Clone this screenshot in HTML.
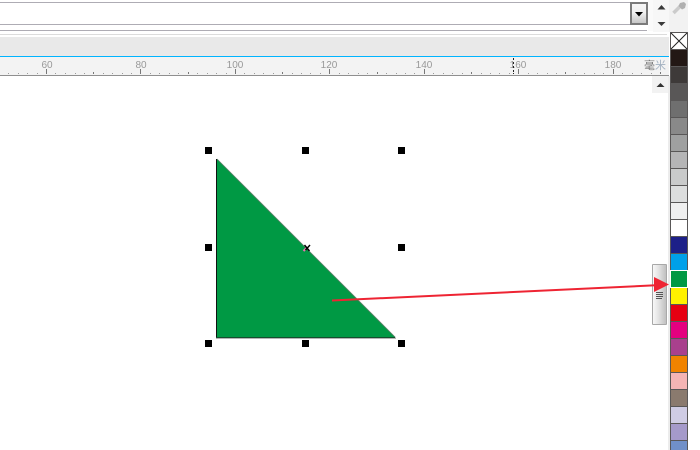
<!DOCTYPE html>
<html>
<head>
<meta charset="utf-8">
<style>
html,body{margin:0;padding:0;width:700px;height:450px;overflow:hidden;background:#fff}
svg{display:block;position:absolute;left:0;top:0}
text{font-family:"Liberation Sans","Noto Sans CJK SC",sans-serif;font-size:10px;fill:#999}
</style>
</head>
<body>
<svg width="700" height="450" viewBox="0 0 700 450" xmlns="http://www.w3.org/2000/svg" shape-rendering="crispEdges">
<defs>
<linearGradient id="btn" x1="0" y1="0" x2="0" y2="1"><stop offset="0" stop-color="#f6f6f6"/><stop offset=".45" stop-color="#f0f0f0"/><stop offset="1" stop-color="#c6c6c6"/></linearGradient>
<linearGradient id="grip" x1="0" y1="0" x2="1" y2="0"><stop offset="0" stop-color="#fafafa"/><stop offset=".45" stop-color="#e2e2e2"/><stop offset="1" stop-color="#bdbdbd"/></linearGradient>
</defs>
<!-- toolbar -->
<rect x="0" y="0" width="700" height="37" fill="#ffffff"/>
<rect x="648" y="0" width="5" height="31" fill="#fafafa"/>
<rect x="653" y="0" width="16" height="32" fill="#f7f7f7"/>
<rect x="669" y="0" width="19" height="32" fill="#f2f2f2"/>
<rect x="0" y="2" width="631" height="1" fill="#aeacb4"/>
<rect x="0" y="24" width="631" height="1" fill="#aeacb4"/>
<rect x="0" y="30" width="647" height="1" fill="#aeacb4"/>
<rect x="0" y="34" width="667" height="1" fill="#dcdcdc"/>
<rect x="631" y="3" width="16" height="21" fill="url(#btn)" stroke="#7a7a7a" stroke-width="2"/>
<rect x="632" y="4" width="14" height="19" fill="url(#btn)"/>
<polygon points="635,12 643,12 639,16.5" fill="#000" shape-rendering="auto"/>
<polygon points="661.5,5 657.5,9.5 665.5,9.5" fill="#3a3a3a" shape-rendering="auto"/>
<polygon points="657.5,22 665.5,22 661.5,26" fill="#3a3a3a" shape-rendering="auto"/>
<!-- eyedropper -->
<g shape-rendering="auto"><path d="M673.5 13 L681 5.5" stroke="#cbcbcb" stroke-width="3.5" fill="none"/><path d="M680 3 L684 2 L686 4 L685 8 L682 9.5 L678.5 6 Z" fill="#b0b0b0"/></g>
<!-- band -->
<rect x="0" y="37" width="669" height="19" fill="#e9e9e9"/>
<rect x="0" y="56" width="669" height="1" fill="#00b4ff"/>
<!-- ruler -->
<rect x="0" y="57" width="669" height="18" fill="#f3f3f3"/>
<rect x="0" y="75" width="669" height="1" fill="#8f8f8f"/>
<g fill="#9a9a9a">
<rect x="8" y="73" width="1" height="1"/><rect x="18" y="73" width="1" height="1"/><rect x="27" y="73" width="1" height="1"/><rect x="37" y="73" width="1" height="1"/>
<rect x="55" y="73" width="1" height="1"/><rect x="65" y="73" width="1" height="1"/><rect x="75" y="73" width="1" height="1"/><rect x="84" y="73" width="1" height="1"/>
<rect x="103" y="73" width="1" height="1"/><rect x="112" y="73" width="1" height="1"/><rect x="122" y="73" width="1" height="1"/><rect x="131" y="73" width="1" height="1"/>
<rect x="150" y="73" width="1" height="1"/><rect x="159" y="73" width="1" height="1"/><rect x="169" y="73" width="1" height="1"/><rect x="178" y="73" width="1" height="1"/>
<rect x="197" y="73" width="1" height="1"/><rect x="207" y="73" width="1" height="1"/><rect x="216" y="73" width="1" height="1"/><rect x="226" y="73" width="1" height="1"/>
<rect x="244" y="73" width="1" height="1"/><rect x="254" y="73" width="1" height="1"/><rect x="263" y="73" width="1" height="1"/><rect x="273" y="73" width="1" height="1"/>
<rect x="292" y="73" width="1" height="1"/><rect x="301" y="73" width="1" height="1"/><rect x="310" y="73" width="1" height="1"/><rect x="320" y="73" width="1" height="1"/>
<rect x="339" y="73" width="1" height="1"/><rect x="348" y="73" width="1" height="1"/><rect x="358" y="73" width="1" height="1"/><rect x="367" y="73" width="1" height="1"/>
<rect x="386" y="73" width="1" height="1"/><rect x="396" y="73" width="1" height="1"/><rect x="405" y="73" width="1" height="1"/><rect x="414" y="73" width="1" height="1"/>
<rect x="433" y="73" width="1" height="1"/><rect x="443" y="73" width="1" height="1"/><rect x="452" y="73" width="1" height="1"/><rect x="462" y="73" width="1" height="1"/>
<rect x="481" y="73" width="1" height="1"/><rect x="490" y="73" width="1" height="1"/><rect x="499" y="73" width="1" height="1"/><rect x="509" y="73" width="1" height="1"/>
<rect x="528" y="73" width="1" height="1"/><rect x="537" y="73" width="1" height="1"/><rect x="547" y="73" width="1" height="1"/><rect x="556" y="73" width="1" height="1"/>
<rect x="575" y="73" width="1" height="1"/><rect x="584" y="73" width="1" height="1"/><rect x="594" y="73" width="1" height="1"/><rect x="603" y="73" width="1" height="1"/>
<rect x="622" y="73" width="1" height="1"/><rect x="632" y="73" width="1" height="1"/><rect x="641" y="73" width="1" height="1"/><rect x="651" y="73" width="1" height="1"/>
</g>
<g fill="#777">
<rect x="46" y="69" width="1" height="5"/><rect x="140" y="69" width="1" height="5"/><rect x="235" y="69" width="1" height="5"/><rect x="329" y="69" width="1" height="5"/><rect x="424" y="69" width="1" height="5"/><rect x="518" y="69" width="1" height="5"/><rect x="613" y="69" width="1" height="5"/>
<rect x="93" y="72" width="1" height="2"/><rect x="188" y="72" width="1" height="2"/><rect x="282" y="72" width="1" height="2"/><rect x="377" y="72" width="1" height="2"/><rect x="471" y="72" width="1" height="2"/><rect x="565" y="72" width="1" height="2"/><rect x="660" y="72" width="1" height="2"/>
</g>
<g text-anchor="middle" shape-rendering="auto">
<text x="47" y="68">60</text><text x="141" y="68">80</text><text x="235" y="68">100</text><text x="329" y="68">120</text><text x="424" y="68">140</text><text x="518" y="68">160</text><text x="613" y="68">180</text>
</g>
<!-- ruler cursor marker (dashed) -->
<g fill="#222">
<rect x="513" y="58" width="1" height="2"/><rect x="513" y="62" width="1" height="2"/><rect x="513" y="66" width="1" height="2"/><rect x="513" y="70" width="1" height="2"/><rect x="513" y="73" width="1" height="1"/>
</g>
<g shape-rendering="auto">
<text x="644" y="69" style="font-size:11px;fill:#777">毫</text>
<text x="655" y="69" style="font-size:11px;fill:#a2b0c0">米</text>
</g>
<!-- scroll up button -->
<rect x="652" y="76" width="16" height="17" fill="#f2f2f2"/>
<polygon points="660.5,83 656.5,87 664.5,87" fill="#333" shape-rendering="auto"/>
<!-- palette -->
<rect x="668" y="76" width="2" height="374" fill="#ececec"/>
<rect x="670" y="32" width="18" height="418" fill="#595757"/>
<rect x="671" y="33" width="16" height="16" fill="#fff"/>
<g shape-rendering="auto"><path d="M671 33 L687 49 M687 33 L671 49" stroke="#222" stroke-width="1"/></g>
<rect x="671" y="50" width="16" height="16" fill="#231815"/>
<rect x="671" y="67" width="16" height="16" fill="#3e3a39"/>
<rect x="671" y="84" width="16" height="16" fill="#595757"/>
<rect x="671" y="101" width="16" height="16" fill="#6f6f6f"/>
<rect x="671" y="118" width="16" height="16" fill="#898989"/>
<rect x="671" y="135" width="16" height="16" fill="#9fa0a0"/>
<rect x="671" y="152" width="16" height="16" fill="#b5b5b6"/>
<rect x="671" y="169" width="16" height="16" fill="#c9caca"/>
<rect x="671" y="186" width="16" height="16" fill="#dcdddd"/>
<rect x="671" y="203" width="16" height="16" fill="#efefef"/>
<rect x="671" y="220" width="16" height="16" fill="#ffffff"/>
<rect x="671" y="237" width="16" height="16" fill="#1d2088"/>
<rect x="671" y="254" width="16" height="16" fill="#00a0e9"/>
<rect x="670" y="270" width="18" height="18" fill="#ffffff"/>
<rect x="671" y="271" width="16" height="16" fill="#009944"/>
<rect x="671" y="288" width="16" height="16" fill="#fff100"/>
<rect x="671" y="305" width="16" height="16" fill="#e60012"/>
<rect x="671" y="322" width="16" height="16" fill="#e4007f"/>
<rect x="671" y="339" width="16" height="16" fill="#a9408d"/>
<rect x="671" y="356" width="16" height="16" fill="#f08300"/>
<rect x="671" y="373" width="16" height="16" fill="#f4b4b4"/>
<rect x="671" y="390" width="16" height="16" fill="#8a7a6e"/>
<rect x="671" y="407" width="16" height="16" fill="#cfcce4"/>
<rect x="671" y="424" width="16" height="16" fill="#a59aca"/>
<rect x="671" y="441" width="16" height="9" fill="#7090c8"/>
<!-- scrollbar grip -->
<rect x="652.5" y="264.5" width="14" height="60" rx="1" fill="url(#grip)" stroke="#a8a8a8"/>
<g fill="#555"><rect x="656" y="292" width="7" height="1"/><rect x="656" y="294" width="7" height="1"/><rect x="656" y="296" width="7" height="1"/><rect x="656" y="298" width="6" height="1"/></g>
<!-- triangle -->
<polygon points="217,159 217,337 395,337" fill="#009944" stroke="none" shape-rendering="auto"/>
<g shape-rendering="auto">
<path d="M217 159 L395.5 337.5" stroke="#5b7f68" stroke-width="0.8" fill="none"/>
<path d="M216.5 159 L216.5 338" stroke="#111" stroke-width="1" fill="none"/>
<path d="M216 337.5 L395 337.5" stroke="#14502e" stroke-width="1" fill="none"/>
<path d="M216 338.5 L396 338.5" stroke="#b5b5b5" stroke-width="1" fill="none"/>
</g>
<!-- handles -->
<g fill="#000">
<rect x="205" y="147" width="7" height="7"/><rect x="302" y="147" width="7" height="7"/><rect x="398" y="147" width="7" height="7"/>
<rect x="205" y="244" width="7" height="7"/><rect x="398" y="244" width="7" height="7"/>
<rect x="205" y="340" width="7" height="7"/><rect x="302" y="340" width="7" height="7"/><rect x="398" y="340" width="7" height="7"/>
</g>
<!-- center x -->
<g shape-rendering="auto">
<path d="M303.5 251 L307 247.5" stroke="#e878b0" stroke-width="2" fill="none"/>
<path d="M304.5 245 L309.5 251 M310 245 L305.5 250" stroke="#000" stroke-width="1.4" fill="none"/>
</g>
<!-- arrow -->
<g shape-rendering="auto">
<path d="M332 300.5 L656 285.3" stroke="#ee2433" stroke-width="2" fill="none"/>
<polygon points="654,277 669,284.5 654,292" fill="#ee2433"/>
</g>
</svg>
</body>
</html>
